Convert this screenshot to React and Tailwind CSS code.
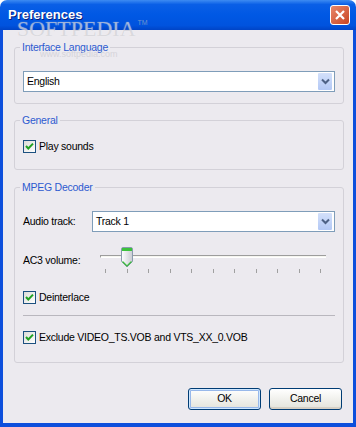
import React from "react";

function CheckBox({ label }) {
  return (
    <label className="flex items-center gap-[3px] h-[13px]">
      <span className="w-[13px] h-[13px] border border-[#1C5180] bg-gradient-to-br from-[#DCDCD7] to-white flex items-center justify-center">
        <svg width="11" height="11" viewBox="0 0 11 11">
          <path d="M2 5 L4.3 7.5 L9 2.6" fill="none" stroke="#21A121" strokeWidth="2" />
        </svg>
      </span>
      <span>{label}</span>
    </label>
  );
}

function Combo({ value, className }) {
  return (
    <div className={`h-[21px] border border-[#7F9DB9] bg-white flex items-center ${className}`}>
      <span className="flex-1 pl-[3px]">{value}</span>
      <div className="w-[16px] h-[19px] mr-px rounded-[2px] border border-white bg-gradient-to-b from-[#D3E0FA] to-[#B3C8F5] flex items-center justify-center">
        <svg width="9" height="7" viewBox="0 0 9 7">
          <path d="M1 1.5 L4.5 5 L8 1.5" fill="none" stroke="#4D6185" strokeWidth="2" />
        </svg>
      </div>
    </div>
  );
}

function Group({ title, className, children }) {
  return (
    <fieldset className={`w-[330px] ml-[11px] border border-[#D3D1D8] rounded-[3px] px-[8px] ${className}`}>
      <legend className="-ml-[3px] px-[2px] leading-[13px] text-[#2C5BD0]">{title}</legend>
      {children}
    </fieldset>
  );
}

function Slider() {
  const ticks = Array.from({ length: 11 });
  return (
    <div className="relative w-[226px] h-[27px]">
      <div className="absolute left-0 right-0 top-[8px] h-[3px] border-t border-[#9D9D9D] border-l border-l-[#9D9D9D] bg-[#F6F6F0] border-b border-b-white" />
      <svg className="absolute left-[21px] top-0" width="12" height="21" viewBox="0 0 12 21">
        <defs>
          <linearGradient id="thumb" x1="0" x2="1" y1="0" y2="0">
            <stop offset="0" stopColor="#FFFFFF" />
            <stop offset="1" stopColor="#C9CBD2" />
          </linearGradient>
        </defs>
        <path d="M0.5 2 Q0.5 0.5 2 0.5 H10 Q11.5 0.5 11.5 2 V14.5 L6 20 L0.5 14.5 Z" fill="url(#thumb)" stroke="#8A9AAE" />
        <rect x="1" y="1" width="10" height="3" fill="#3CC23C" />
        <path d="M1.5 14.5 L6 19 L10.5 14.5" fill="none" stroke="#3CBE3C" strokeWidth="1.2" />
      </svg>
      <div className="absolute left-0 right-0 top-[22px] flex justify-between px-[5px]">
        {ticks.map((_, i) => (
          <span key={i} className="w-px h-[4px] bg-[#A0A0A0]" />
        ))}
      </div>
    </div>
  );
}

function Button({ children, primary }) {
  return (
    <button
      className={`w-[73px] h-[22px] rounded-[3px] border border-[#003C74] bg-gradient-to-b from-white to-[#E3E3DB] text-black ${
        primary ? "shadow-[inset_0_0_0_1px_#CEE7FF,inset_0_0_0_2px_#98B8EA]" : "shadow-[inset_0_-2px_0_#D6D0C5]"
      }`}
    >
      {children}
    </button>
  );
}

export default function App() {
  return (
    <div className="relative w-[356px] h-[427px] overflow-hidden bg-white font-['Liberation_Sans',sans-serif] text-[10.5px] tracking-[-0.25px] text-black">
      <div className="flex flex-col w-full h-full">
        <div className="h-[30px] rounded-t-[7px] bg-[linear-gradient(to_bottom,#3D8BF2_0%,#0A5FE6_15%,#0058E4_50%,#0053DE_85%,#0044C6_100%)] flex items-center justify-between pl-[8px] pr-[6px]">
          <span className="text-white font-bold text-[13px] tracking-normal [text-shadow:1px_1px_0_#0A1E78]">Preferences</span>
          <div className="w-[20px] h-[20px] rounded-[3px] border border-white bg-gradient-to-br from-[#E8876A] to-[#C8431F] flex items-center justify-center">
            <svg width="12" height="12" viewBox="0 0 12 12">
              <path d="M2 2 L10 10 M10 2 L2 10" stroke="white" strokeWidth="2.2" />
            </svg>
          </div>
        </div>
        <div className="flex-1 flex flex-col bg-[#ECEAEF] border-x-[3px] border-b-[4px] border-[#0D4FDC]">
          <Group title="Interface Language" className="mt-[11px] pb-[11px]">
            <Combo value="English" className="mt-[17px]" />
          </Group>
          <Group title="General" className="mt-[10px] pb-[16px]">
            <div className="mt-[13px]">
              <CheckBox label="Play sounds" />
            </div>
          </Group>
          <Group title="MPEG Decoder" className="mt-[11px] pb-[18px]">
            <div className="mt-[17px] flex items-center">
              <span className="w-[69px]">Audio track:</span>
              <Combo value="Track 1" className="flex-1" />
            </div>
            <div className="mt-[15px] flex items-start">
              <span className="w-[77px] mt-[6px]">AC3 volume:</span>
              <Slider />
            </div>
            <div className="mt-[17px]">
              <CheckBox label="Deinterlace" />
            </div>
            <div className="mt-[11px] border-t border-[#B9B7BE]" />
            <div className="mt-[15px]">
              <CheckBox label="Exclude VIDEO_TS.VOB and VTS_XX_0.VOB" />
            </div>
          </Group>
          <div className="mt-[25px] mr-[11px] flex justify-end gap-[8px]">
            <Button primary>OK</Button>
            <Button>Cancel</Button>
          </div>
        </div>
      </div>
      <div className="absolute left-[17px] top-[18px] pointer-events-none select-none tracking-normal">
        <div className="flex items-start">
          <span className="font-['Liberation_Serif',serif] text-[22px] leading-[22px] text-[#BDBDC4]/50 [text-shadow:0_0_1px_rgba(255,255,255,0.6)]">SOFTPEDIA</span>
          <span className="text-[7px] text-[#BDBDC4]/60 ml-[2px]">TM</span>
        </div>
        <div className="ml-[23px] mt-[9px] text-[9px] leading-[10px] text-[#D6D4DA]">www.softpedia.com</div>
      </div>
    </div>
  );
}
